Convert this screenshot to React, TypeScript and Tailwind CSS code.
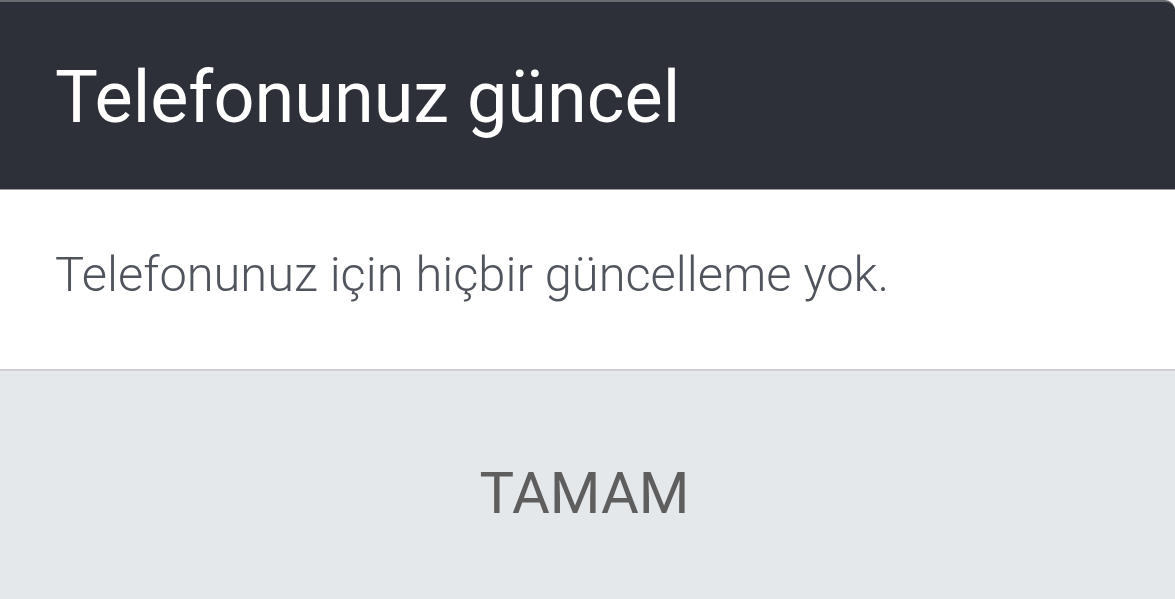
export default function App() {
  return (
    <div
      className="flex h-[599px] w-[1175px] flex-col overflow-hidden bg-white"
      style={{ fontFamily: "Roboto, 'Noto Sans', sans-serif" }}
    >
      {/* Title bar */}
      <div className="h-[190px] shrink-0 border-t-2 border-b border-t-[#6a6b6e] border-b-[#9c9da0] rounded-tr-[10px] bg-[#2d3039] pl-[55px]">
        <h1 className="pt-[52px] text-[72px] font-normal leading-[88px] text-white">
          Telefonunuz güncel
        </h1>
      </div>

      {/* Message */}
      <div className="h-[179px] shrink-0 pl-[55px]">
        <p className="pt-[56px] text-[48.8px] font-light leading-[58px] text-[#50555d]">
          Telefonunuz için hiçbir güncelleme yok.
        </p>
      </div>

      {/* Action */}
      <button className="flex flex-1 justify-center border-t-2 border-[#cdcfd2] bg-[#e5e8eb] pt-[88px] pr-[6px] text-[58px] leading-[68px] text-[#5e5e5e]">
        TAMAM
      </button>
    </div>
  );
}
